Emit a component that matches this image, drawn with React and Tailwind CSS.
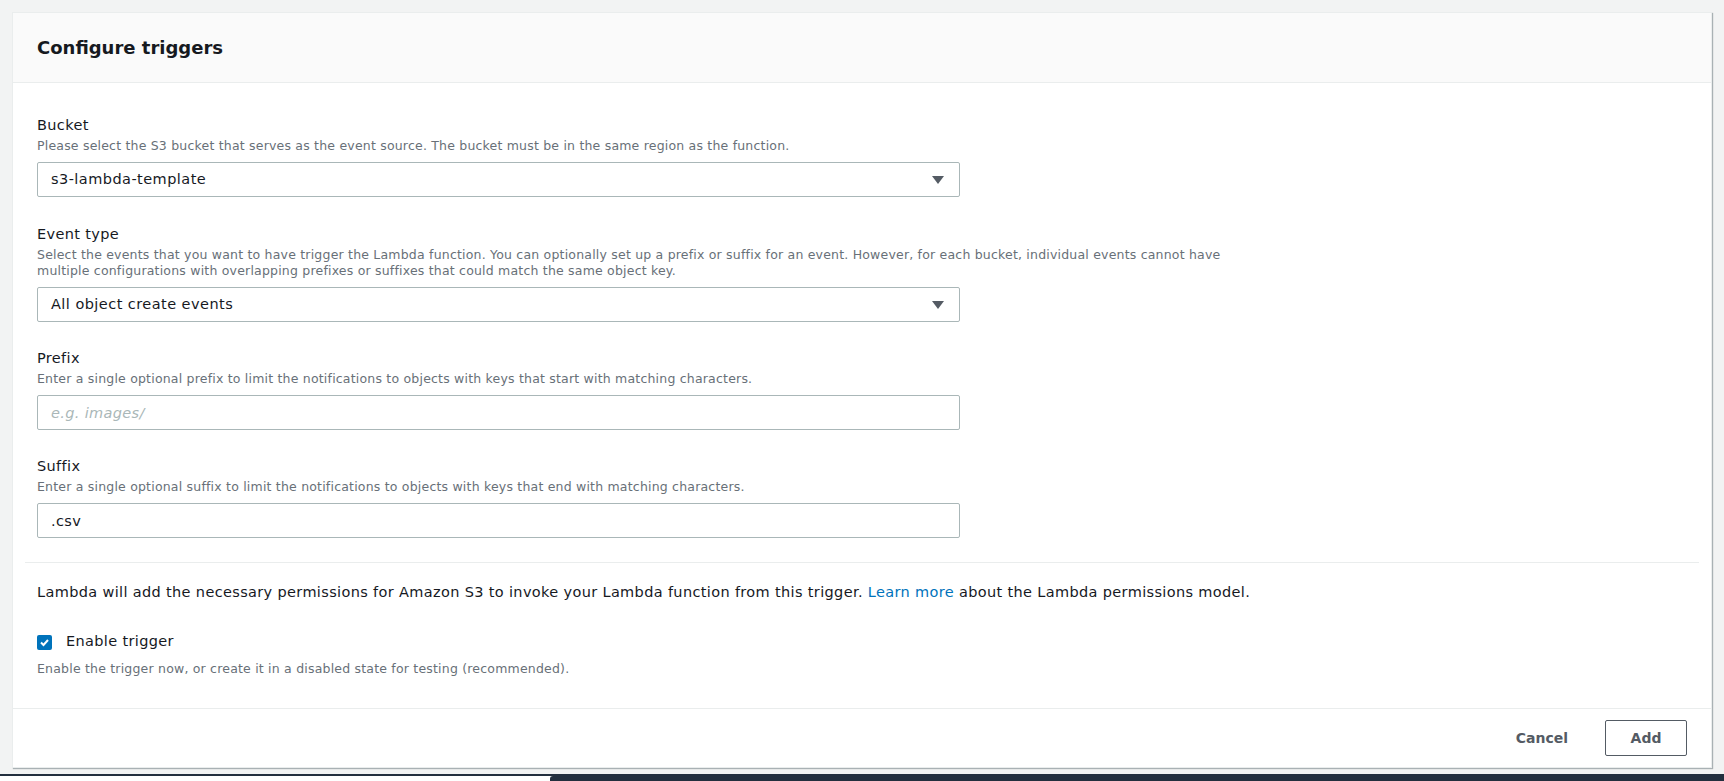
import React, { useState } from 'react';

function Caret() {
    return (
        <svg width="12" height="8" viewBox="0 0 12 8" className="shrink-0">
            <path d="M0 0 L12 0 L6 8 Z" fill="#545b64" />
        </svg>
    );
}

function Field({ label, desc, className = '', children }) {
    return (
        <div className={className}>
            <div className="text-[14.5px] tracking-[0.35px] leading-[22px] text-[#16191f]">{label}</div>
            <div className="mt-[2px] text-[12.5px] tracking-[0.2px] leading-[16px] text-[#687078]">{desc}</div>
            <div className="mt-[8px] w-[923px]">{children}</div>
        </div>
    );
}

function SelectBox({ value }) {
    return (
        <div className="h-[35px] flex items-center justify-between pl-[13px] pr-[15px] border border-[#aab7b8] rounded-[2px] bg-white">
            <span className="text-[14.5px] tracking-[0.45px] text-[#16191f]">{value}</span>
            <Caret />
        </div>
    );
}

function TextBox({ value, placeholder }) {
    return (
        <input
            defaultValue={value}
            placeholder={placeholder}
            className="w-full h-[35px] px-[13px] border border-[#aab7b8] rounded-[2px] bg-white text-[14.5px] tracking-[0.35px] text-[#16191f] placeholder:italic placeholder:text-[#aab7b8] outline-none"
        />
    );
}

export default function App() {
    const [enabled, setEnabled] = useState(true);

    return (
        <div className="h-[781px] w-full overflow-hidden bg-[#f2f3f3] flex flex-col" style={{ fontFamily: '"DejaVu Sans", Inter, Arial, sans-serif' }}>
            <div className="mx-[12px] mt-[12px] h-[756px] bg-white border border-[#eaeded] shadow-[1px_1px_1px_0_rgba(0,28,36,0.3)] flex flex-col">
                <div className="h-[70px] shrink-0 flex items-center px-[24px] bg-[#fafafa] border-b border-[#eaeded]">
                    <h2 className="text-[18px] font-bold text-[#16191f]">Configure triggers</h2>
                </div>

                <div className="flex-1 px-[24px] pt-[31px]">
                    <Field label="Bucket" desc="Please select the S3 bucket that serves as the event source. The bucket must be in the same region as the function.">
                        <SelectBox value="s3-lambda-template" />
                    </Field>

                    <Field
                        className="mt-[26px]"
                        label="Event type"
                        desc={<>Select the events that you want to have trigger the Lambda function. You can optionally set up a prefix or suffix for an event. However, for each bucket, individual events cannot have<br />multiple configurations with overlapping prefixes or suffixes that could match the same object key.</>}
                    >
                        <SelectBox value="All object create events" />
                    </Field>

                    <Field className="mt-[25px]" label="Prefix" desc="Enter a single optional prefix to limit the notifications to objects with keys that start with matching characters.">
                        <TextBox placeholder="e.g. images/" />
                    </Field>

                    <Field className="mt-[25px]" label="Suffix" desc="Enter a single optional suffix to limit the notifications to objects with keys that end with matching characters.">
                        <TextBox value=".csv" />
                    </Field>

                    <div className="mt-[24px] -mx-[12px] border-t border-[#eaeded]" />

                    <p className="mt-[18px] text-[14.5px] tracking-[0.35px] leading-[22px] text-[#16191f]">
                        Lambda will add the necessary permissions for Amazon S3 to invoke your Lambda function from this trigger.{' '}
                        <a href="#" className="text-[#0073bb]">Learn more</a> about the Lambda permissions model.
                    </p>

                    <label className="mt-[28px] flex items-center gap-[14px] h-[22px] cursor-pointer">
                        <span
                            onClick={() => setEnabled(!enabled)}
                            className={enabled
                                ? 'w-[15px] h-[15px] rounded-[2px] bg-[#0073bb] flex items-center justify-center'
                                : 'w-[15px] h-[15px] rounded-[2px] border border-[#aab7b8] bg-white'}
                        >
                            {enabled && (
                                <svg width="11" height="11" viewBox="0 0 11 11">
                                    <path d="M2 5.5 L4.5 8 L9 3" stroke="white" strokeWidth="2" fill="none" />
                                </svg>
                            )}
                        </span>
                        <span className="text-[14.5px] tracking-[0.35px] text-[#16191f]">Enable trigger</span>
                    </label>
                    <div className="mt-[8px] text-[12.5px] tracking-[0.2px] leading-[16px] text-[#687078]">
                        Enable the trigger now, or create it in a disabled state for testing (recommended).
                    </div>
                </div>

                <div className="h-[59px] shrink-0 border-t border-[#eaeded] flex items-center justify-end gap-[37px] pr-[24px]">
                    <button className="text-[14px] font-bold text-[#545b64]">Cancel</button>
                    <button className="w-[82px] h-[36px] border border-[#545b64] rounded-[2px] text-[14px] font-bold text-[#545b64] bg-white">Add</button>
                </div>
            </div>

            <div className="mt-auto h-[7px] shrink-0 flex flex-col">
                <div className="h-[2px] bg-[#232f3e]" />
                <div className="flex-1 flex">
                    <div className="w-[550px] bg-white" />
                    <div className="flex-1 bg-[#232f3e] rounded-tl-[3px]" />
                </div>
            </div>
        </div>
    );
}
